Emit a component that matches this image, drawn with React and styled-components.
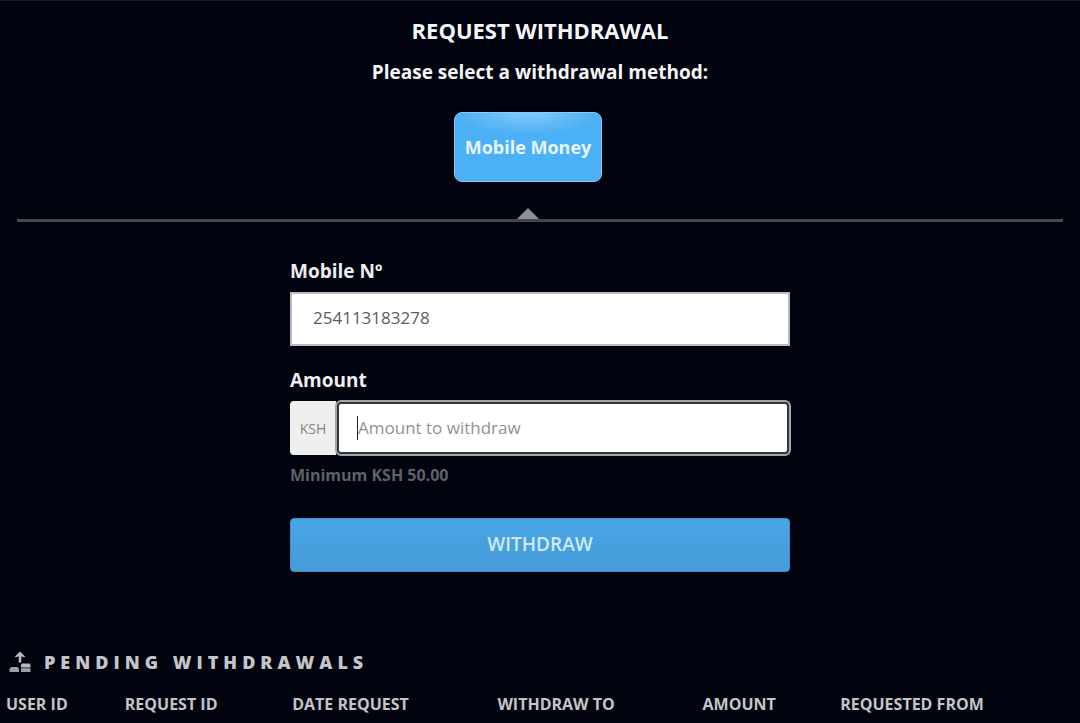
import React, { useState } from 'react';
import styled, { createGlobalStyle } from 'styled-components';

const columns = [
  { label: 'User ID', width: '11%' },
  { label: 'Request ID', width: '15.5%' },
  { label: 'Date request', width: '19%' },
  { label: 'Withdraw to', width: '19%' },
  { label: 'Amount', width: '12.75%' },
  { label: 'Requested from', width: '22.75%' },
];

export default function App() {
  const [mobile, setMobile] = useState('254113183278');
  const [amount, setAmount] = useState('');

  const handleSubmit = (event) => {
    event.preventDefault();
  };

  return (
    <>
      <GlobalStyle />
      <Page>
        <Header>
          <h1>Request withdrawal</h1>
          <p>Please select a withdrawal method:</p>
        </Header>
        <Methods>
          <Method>
            <MethodButton type="button">Mobile Money</MethodButton>
            <Arrow />
          </Method>
        </Methods>
        <Form onSubmit={handleSubmit}>
          <Label htmlFor="mobile">Mobile Nº</Label>
          <MobileInput
            id="mobile"
            type="text"
            value={mobile}
            onChange={(event) => setMobile(event.target.value)}
          />
          <Label htmlFor="amount">Amount</Label>
          <AmountGroup>
            <Currency>KSH</Currency>
            <AmountField>
              <AmountInput
                id="amount"
                type="text"
                placeholder="Amount to withdraw"
                value={amount}
                onChange={(event) => setAmount(event.target.value)}
              />
              {!amount && <Caret />}
            </AmountField>
          </AmountGroup>
          <Hint>Minimum KSH 50.00</Hint>
          <SubmitButton type="submit">Withdraw</SubmitButton>
        </Form>
        <Pending>
          <PendingTitle>
            <UploadIcon />
            <h2>Pending withdrawals</h2>
          </PendingTitle>
          <Table>
            <thead>
              <tr>
                {columns.map((column) => (
                  <HeadCell key={column.label} $width={column.width}>
                    {column.label}
                  </HeadCell>
                ))}
              </tr>
            </thead>
          </Table>
        </Pending>
      </Page>
    </>
  );
}

function UploadIcon() {
  return (
    <svg width="22" height="22" viewBox="0 0 22 22" fill="#b9bbbe" aria-hidden="true">
      <path d="M11 0.5 L16 5.5 Q16 6.5 15 6.3 L12.3 5.2 V11.5 H9.7 V5.2 L7 6.3 Q6 6.5 6 5.5 Z" />
      <path d="M2 16 H8.5 L10 18 V21 H0.5 V18 Z" opacity="0.85" />
      <path d="M13 12.5 H20.5 L21.5 14 V16.5 H12 V14 Z" />
      <rect x="12" y="17.2" width="9.5" height="3.8" rx="0.5" opacity="0.85" />
    </svg>
  );
}

const GlobalStyle = createGlobalStyle`
  * {
    box-sizing: border-box;
  }
  body {
    margin: 0;
    background-color: #01040f;
    font-family: 'Open Sans', 'Noto Sans', sans-serif;
  }
  button, input {
    font-family: inherit;
  }
`;

const Page = styled.main`
  border-top: 1px solid #171b25;
`;

const Header = styled.header`
  padding-top: 13px;
  text-align: center;
  color: #f5f6f8;
  h1 {
    margin: 0;
    font-size: 22px;
    line-height: 32px;
    font-weight: 700;
    text-transform: uppercase;
  }
  p {
    margin: 13px 0 0;
    font-size: 19px;
    line-height: 26px;
    font-weight: 700;
  }
`;

const Methods = styled.section`
  display: flex;
  justify-content: center;
  margin: 27px 17px 0;
  border-bottom: 3px solid #404850;
`;

const Method = styled.div`
  display: flex;
  flex-direction: column;
  align-items: center;
  gap: 26px;
  margin-right: 24px;
`;

const MethodButton = styled.button`
  height: 70px;
  padding: 0 10px;
  border: 1px solid #8dc9f5;
  border-radius: 8px;
  background: radial-gradient(ellipse 50% 32% at 50% 0, #7fcafa, #4bb0f5);
  color: #e9f6ff;
  font-size: 18px;
  font-weight: 700;
  cursor: pointer;
`;

const Arrow = styled.span`
  border: 11px solid transparent;
  border-top: 0;
  border-bottom-color: #8b9096;
`;

const Form = styled.form`
  display: flex;
  flex-direction: column;
  max-width: 500px;
  margin: 0 auto;
  padding-top: 35px;
`;

const Label = styled.label`
  margin-bottom: 7px;
  color: #eceef0;
  font-size: 19px;
  line-height: 28px;
  font-weight: 700;
`;

const MobileInput = styled.input`
  height: 54px;
  margin-bottom: 20px;
  padding: 0 21px 3px;
  border: 2px solid #b9bac6;
  border-radius: 0;
  outline: none;
  background-color: #fff;
  color: #5c5c5c;
  font-size: 17px;
  font-weight: 400;
`;

const AmountGroup = styled.div`
  display: flex;
  height: 54px;
`;

const Currency = styled.span`
  display: flex;
  align-items: center;
  justify-content: center;
  width: 46px;
  border-radius: 4px 0 0 4px;
  background-color: #efefef;
  color: #858585;
  font-size: 14px;
`;

const AmountField = styled.div`
  position: relative;
  flex: 1;
`;

const AmountInput = styled.input`
  width: 100%;
  height: 100%;
  padding: 0 19px 2px;
  border: 3px solid #34373a;
  border-radius: 5px;
  outline: 2px solid #a3a6a8;
  outline-offset: -1px;
  background-color: #fff;
  color: #5c5c5c;
  font-size: 17px;
  &::placeholder {
    color: #929292;
    opacity: 1;
  }
`;

const Caret = styled.span`
  position: absolute;
  top: 15px;
  left: 21px;
  width: 1px;
  height: 24px;
  background-color: #222;
  pointer-events: none;
`;

const Hint = styled.small`
  margin-top: 8px;
  color: #5d6268;
  font-size: 16px;
  line-height: 24px;
  font-weight: 700;
`;

const SubmitButton = styled.button`
  height: 54px;
  margin-top: 31px;
  padding-bottom: 3px;
  border: 1px solid #3f8fca;
  border-radius: 4px;
  background: linear-gradient(#48a5e6, #459cd8);
  color: #cfeaf5;
  font-size: 19px;
  font-weight: 600;
  text-transform: uppercase;
  cursor: pointer;
`;

const Pending = styled.section`
  padding-top: 76px;
  color: #c3c5c7;
`;

const PendingTitle = styled.div`
  display: flex;
  align-items: center;
  gap: 13px;
  padding-left: 9px;
  h2 {
    margin: 0;
    font-size: 18px;
    line-height: 28px;
    font-weight: 800;
    letter-spacing: 5px;
    text-transform: uppercase;
  }
`;

const Table = styled.table`
  width: 100%;
  margin-top: 14px;
  border-collapse: collapse;
  table-layout: fixed;
`;

const HeadCell = styled.th`
  width: ${({ $width }) => $width};
  padding: 0 0 0 6px;
  font-size: 16px;
  line-height: 28px;
  font-weight: 700;
  text-align: left;
  text-transform: uppercase;
  white-space: nowrap;
`;
